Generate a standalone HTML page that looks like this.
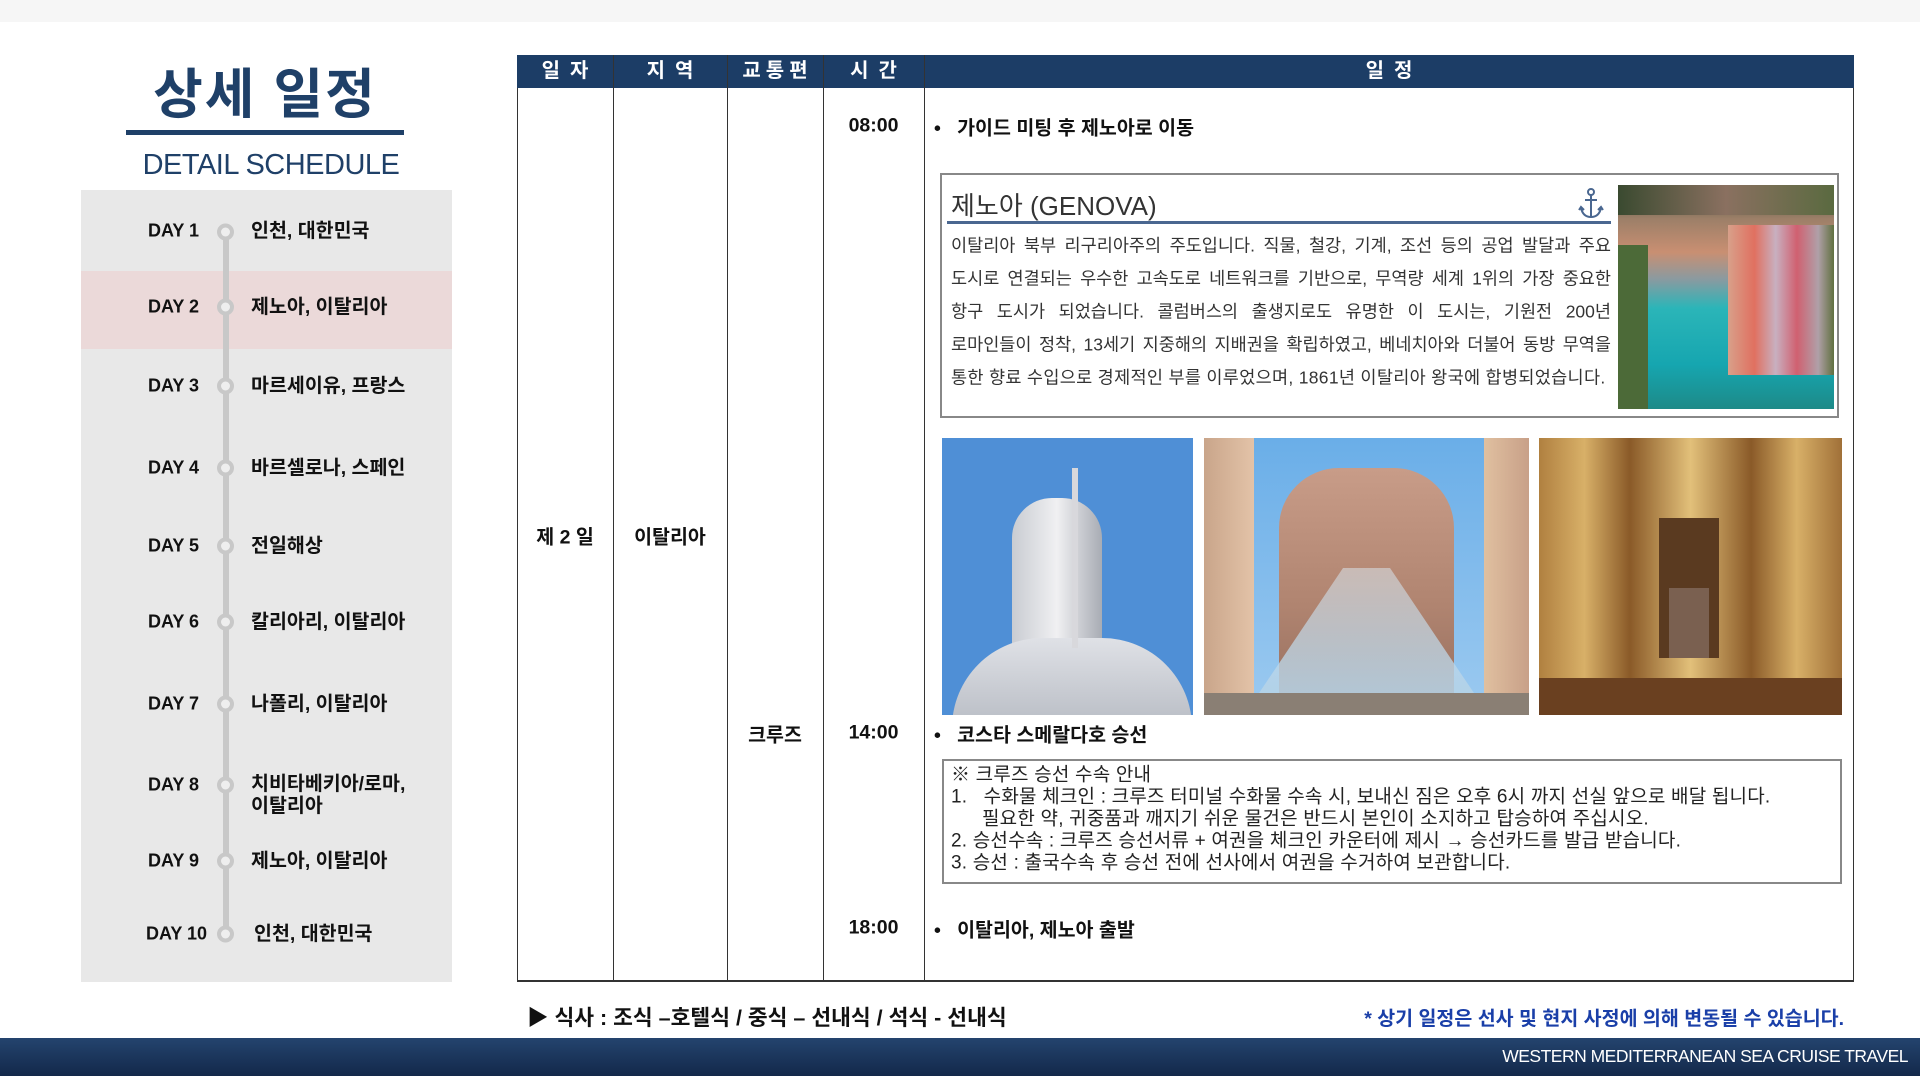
<!DOCTYPE html>
<html><head><meta charset="utf-8"><style>
*{margin:0;padding:0;box-sizing:border-box}
body{width:1920px;height:1076px;position:relative;background:#fff;font-family:"Liberation Sans","Noto Sans CJK KR",sans-serif;overflow:hidden;color:#111}
.a{position:absolute}
.b{font-weight:bold}
.day{position:absolute;left:148px;font-size:18px;font-weight:bold;transform:translateY(-50%)}
.dot{position:absolute;left:217px;width:17px;height:17px;border-radius:50%;border:4px solid #c8c8c8;background:#eee;transform:translateY(-50%)}
.place{position:absolute;left:251px;font-size:19.5px;font-weight:bold;transform:translateY(-50%);line-height:22px}
.hd{position:absolute;top:0;height:33px;line-height:33px;color:#fff;font-weight:bold;font-size:20px;text-align:center;letter-spacing:10px;text-indent:10px}
.vl{position:absolute;top:55px;bottom:94px;width:1px;background:#333}
.t{font-size:19.5px;font-weight:bold;transform:translateY(-50%)}
.gt{position:absolute;left:951px;width:660px;font-size:17.5px;color:#333;transform:translateY(-50%);white-space:nowrap;text-align:justify;text-align-last:justify}
.nt{position:absolute;left:951px;font-size:19px;color:#222;transform:translateY(-50%);white-space:nowrap;letter-spacing:0.2px}
</style></head><body>
<div class="a" style="left:0;top:0;width:1920px;height:22px;background:#f6f6f6"></div>
<div class="a b" style="left:126px;width:278px;top:50px;text-align:center;font-size:54px;color:#1f4068;letter-spacing:2px">상세 일정</div>
<div class="a" style="left:126px;top:130px;width:278px;height:5px;background:#1f4068"></div>
<div class="a" style="left:126px;width:290px;top:149px;text-align:center;font-size:29px;color:#1f4068;letter-spacing:-0.5px">DETAIL SCHEDULE</div>
<div class="a" style="left:81px;top:190px;width:371px;height:792px;background:#e8e8e8"></div>
<div class="a" style="left:81px;top:271px;width:371px;height:78px;background:#ebd9d9"></div>
<div class="a" style="left:223px;top:231px;width:6px;height:703px;background:#c8c8c8"></div>
<div class="day" style="top:231px">DAY 1</div><div class="dot" style="top:232px"></div><div class="place" style="top:231px">인천, 대한민국</div>
<div class="day" style="top:307px">DAY 2</div><div class="dot" style="top:307px"></div><div class="place" style="top:307px">제노아, 이탈리아</div>
<div class="day" style="top:386px">DAY 3</div><div class="dot" style="top:386px"></div><div class="place" style="top:386px">마르세이유, 프랑스</div>
<div class="day" style="top:468px">DAY 4</div><div class="dot" style="top:468px"></div><div class="place" style="top:468px">바르셀로나, 스페인</div>
<div class="day" style="top:546px">DAY 5</div><div class="dot" style="top:546px"></div><div class="place" style="top:546px">전일해상</div>
<div class="day" style="top:622px">DAY 6</div><div class="dot" style="top:622px"></div><div class="place" style="top:622px">칼리아리, 이탈리아</div>
<div class="day" style="top:704px">DAY 7</div><div class="dot" style="top:704px"></div><div class="place" style="top:704px">나폴리, 이탈리아</div>
<div class="day" style="top:785px">DAY 8</div><div class="dot" style="top:785px"></div><div class="place" style="top:795px">치비타베키아/로마,<br>이탈리아</div>
<div class="day" style="top:861px">DAY 9</div><div class="dot" style="top:861px"></div><div class="place" style="top:861px">제노아, 이탈리아</div>
<div class="day" style="top:934px;left:146px">DAY 10</div><div class="dot" style="top:934px"></div><div class="place" style="top:934px;left:254px">인천, 대한민국</div>

<div class="a" style="left:517px;top:55px;width:1337px;height:927px;border:1px solid #333;border-bottom:2px solid #333"></div>
<div class="a" style="left:517px;top:55px;width:1337px;height:33px;background:#1c3d66">
<div class="hd" style="left:0;width:96px">일자</div>
<div class="hd" style="left:96px;width:114px">지역</div>
<div class="hd" style="left:210px;width:96px;letter-spacing:5px;text-indent:5px">교통편</div>
<div class="hd" style="left:306px;width:101px">시간</div>
<div class="hd" style="left:407px;width:930px">일정</div>
</div>
<div class="vl" style="left:613px"></div><div class="vl" style="left:727px"></div><div class="vl" style="left:823px"></div><div class="vl" style="left:924px"></div>

<div class="a t" style="left:517px;width:96px;text-align:center;top:535px">제 2 일</div>
<div class="a t" style="left:613px;width:114px;text-align:center;top:535px">이탈리아</div>
<div class="a t" style="left:727px;width:96px;text-align:center;top:733px">크루즈</div>
<div class="a t" style="left:823px;width:101px;text-align:center;top:126px">08:00</div>
<div class="a t" style="left:823px;width:101px;text-align:center;top:733px">14:00</div>
<div class="a t" style="left:823px;width:101px;text-align:center;top:928px">18:00</div>
<div class="a t" style="left:934px;top:126px">•&nbsp;&nbsp;&nbsp;가이드 미팅 후 제노아로 이동</div>
<div class="a t" style="left:934px;top:733px">•&nbsp;&nbsp;&nbsp;코스타 스메랄다호 승선</div>
<div class="a t" style="left:934px;top:928px">•&nbsp;&nbsp;&nbsp;이탈리아, 제노아 출발</div>

<div class="a" style="left:940px;top:173px;width:899px;height:245px;border:2px solid #888"></div>
<div class="a" style="left:951px;top:186px;font-size:26px;color:#333">제노아 (GENOVA)</div>
<div class="a" style="left:947px;top:221px;width:664px;height:3px;background:#4a6790"></div>
<svg class="a" style="left:1578px;top:188px" width="26" height="32" viewBox="0 0 26 32" fill="none" stroke="#4a6790" stroke-width="2"><circle cx="13" cy="4" r="3"/><line x1="13" y1="7" x2="13" y2="29"/><line x1="7" y1="12" x2="19" y2="12"/><path d="M3 20 Q5 29 13 29 Q21 29 23 20"/><path d="M1 22 L3 19 L6 22 M20 22 L23 19 L25 22"/></svg>
<div class="gt" style="top:245px">이탈리아 북부 리구리아주의 주도입니다. 직물, 철강, 기계, 조선 등의 공업 발달과 주요</div>
<div class="gt" style="top:278px">도시로 연결되는 우수한 고속도로 네트워크를 기반으로, 무역량 세계 1위의 가장 중요한</div>
<div class="gt" style="top:311px">항구 도시가 되었습니다. 콜럼버스의 출생지로도 유명한 이 도시는, 기원전 200년</div>
<div class="gt" style="top:344px">로마인들이 정착, 13세기 지중해의 지배권을 확립하였고, 베네치아와 더불어 동방 무역을</div>
<div class="gt" style="top:377px;text-align-last:left;width:auto;letter-spacing:0.3px">통한 향료 수입으로 경제적인 부를 이루었으며, 1861년 이탈리아 왕국에 합병되었습니다.</div>
<div class="a" style="left:1618px;top:185px;width:216px;height:224px;overflow:hidden;background:linear-gradient(180deg,#3d4a32 0%,#9c7f68 15%,#c98f72 30%,#8a9aa0 42%,#2bb5b8 55%,#16a6b0 80%,#1d8a88 100%)">
<div class="a" style="left:110px;top:40px;width:106px;height:150px;background:linear-gradient(90deg,#d8a08a,#e07060 25%,#c8b0c0 45%,#d06070 65%,#b0a0a8 85%,#607040)"></div>
<div class="a" style="left:0;top:60px;width:30px;height:164px;background:#4c6a38"></div>
<div class="a" style="left:0;top:0;width:216px;height:30px;background:linear-gradient(90deg,#3a4a30,#8a7060,#5a6a40)"></div>
</div>

<div class="a" style="left:942px;top:438px;width:251px;height:277px;background:#4f8fd6;overflow:hidden">
<div class="a" style="left:70px;top:60px;width:90px;height:190px;background:linear-gradient(90deg,#c9ccd2,#f0f0f2,#a8acb4);border-radius:40px 40px 10px 10px"></div>
<div class="a" style="left:10px;top:200px;width:240px;height:90px;background:linear-gradient(180deg,#dfe1e6,#b8bcc4);border-radius:120px 120px 0 0"></div>
<div class="a" style="left:130px;top:30px;width:6px;height:180px;background:#d8d8dc"></div>
</div>
<div class="a" style="left:1204px;top:438px;width:325px;height:277px;background:linear-gradient(180deg,#6aaee8,#9ccaf0);overflow:hidden">
<div class="a" style="left:0;top:0;width:50px;height:277px;background:linear-gradient(90deg,#c9a58a,#e3c3a8)"></div>
<div class="a" style="left:280px;top:0;width:45px;height:277px;background:linear-gradient(90deg,#e0c0a0,#c8a088)"></div>
<div class="a" style="left:75px;top:30px;width:175px;height:230px;background:linear-gradient(180deg,#c89c88,#b08470 60%,#987060);border-radius:60px 60px 0 0"></div>
<div class="a" style="left:45px;top:130px;width:235px;height:140px;background:linear-gradient(180deg,rgba(220,235,245,.5),rgba(180,210,230,.9));clip-path:polygon(40% 0,60% 0,100% 100%,0 100%)"></div>
<div class="a" style="left:0;top:255px;width:325px;height:22px;background:#8a7f74"></div>
</div>
<div class="a" style="left:1539px;top:438px;width:303px;height:277px;background:linear-gradient(90deg,#b08040,#d8b068 15%,#8a5a28 30%,#e2c07a 50%,#8a5a28 70%,#d8b068 85%,#a07038);overflow:hidden">
<div class="a" style="left:120px;top:80px;width:60px;height:140px;background:#5a3a20"></div>
<div class="a" style="left:130px;top:150px;width:40px;height:70px;background:#7a6050"></div>
<div class="a" style="left:0;top:240px;width:303px;height:37px;background:#6a4020"></div>
</div>

<div class="a" style="left:942px;top:759px;width:900px;height:125px;border:2px solid #888"></div>
<div class="nt" style="top:773px">※ 크루즈 승선 수속 안내</div>
<div class="nt" style="top:795px">1.&nbsp;&nbsp;&nbsp;수화물 체크인 : 크루즈 터미널 수화물 수속 시, 보내신 짐은 오후 6시 까지 선실 앞으로 배달 됩니다.</div>
<div class="nt" style="top:817px;left:982px">필요한 약, 귀중품과 깨지기 쉬운 물건은 반드시 본인이 소지하고 탑승하여 주십시오.</div>
<div class="nt" style="top:839px">2. 승선수속 : 크루즈 승선서류 + 여권을 체크인 카운터에 제시 → 승선카드를 발급 받습니다.</div>
<div class="nt" style="top:861px">3. 승선 : 출국수속 후 승선 전에 선사에서 여권을 수거하여 보관합니다.</div>

<div class="a b" style="left:527px;top:1001px;font-size:21.5px">▶ 식사 : 조식 –호텔식 / 중식 – 선내식 / 석식 - 선내식</div>
<div class="a b" style="right:76px;top:1002px;font-size:19.5px;color:#1a3fa8">* 상기 일정은 선사 및 현지 사정에 의해 변동될 수 있습니다.</div>

<div class="a" style="left:0;top:1038px;width:1920px;height:38px;background:linear-gradient(180deg,#24446e,#13284a)"></div>
<div class="a" style="right:12px;top:1046px;font-size:17.5px;color:#fff;letter-spacing:-0.5px">WESTERN MEDITERRANEAN SEA CRUISE TRAVEL</div>
</body></html>
